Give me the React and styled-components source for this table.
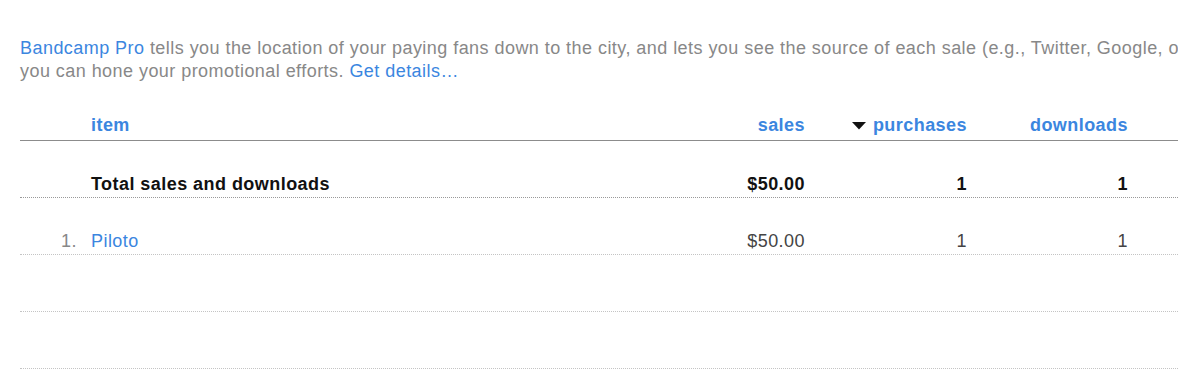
import React from "react";
import styled, { createGlobalStyle } from "styled-components";

const GlobalStyle = createGlobalStyle`
  html, body {
    margin: 0;
    padding: 0;
    background: #fff;
    overflow: hidden;
  }
  body {
    font-family: "Liberation Sans", Arial, Helvetica, sans-serif;
    font-size: 18px;
    line-height: 23px;
    letter-spacing: 0.45px;
  }
`;

const Page = styled.div`
  width: 1300px;
  padding: 37px 0 0 20px;
`;

const Link = styled.a`
  color: #3b86df;
  text-decoration: none;
  font-weight: ${(p) => (p.$bold ? "bold" : "normal")};
  cursor: pointer;
`;

const Intro = styled.p`
  margin: 0 0 31px;
  color: #888;
  white-space: nowrap;
`;

const Table = styled.div`
  width: 1250px;
`;

const Row = styled.div`
  display: grid;
  grid-template-columns: 57px 628px 100px 162px 161px 142px;
  align-items: end;
  padding: ${(p) => (p.$head ? "0 0 3px" : "32px 0 1px")};
  min-height: ${(p) => (p.$head ? "auto" : "23px")};
  border-bottom: 1px ${(p) => (p.$head ? "solid" : "dotted")}
    ${(p) => p.$line};
  font-weight: ${(p) => (p.$bold ? "bold" : "normal")};
  color: ${(p) => (p.$bold ? "#111" : "#444")};
`;

const Num = styled.span`
  text-align: right;
  color: #888;
`;

const Item = styled.span`
  padding-left: 14px;
`;

const Cell = styled.span`
  text-align: right;
  white-space: nowrap;
`;

const SortArrow = styled.svg`
  width: 14px;
  height: 8px;
  margin-right: 7px;
  vertical-align: 1px;
`;

const rows = [
  { num: "1.", name: "Piloto", sales: "$50.00", purchases: "1", downloads: "1" },
  null,
  null,
];

export default function App() {
  return (
    <>
      <GlobalStyle />
      <Page>
        <Intro>
          <Link>Bandcamp Pro</Link> tells you the location of your paying fans
          down to the city, and lets you see the source of each sale (e.g.,
          Twitter, Google, or a particular blog), so
          <br />
          you can hone your promotional efforts. <Link>Get details…</Link>
        </Intro>
        <Table>
          <Row $head $line="#8c8c8c">
            <span />
            <Item>
              <Link $bold>item</Link>
            </Item>
            <Cell>
              <Link $bold>sales</Link>
            </Cell>
            <Cell>
              <SortArrow viewBox="0 0 14 8">
                <polygon points="0,0 14,0 7,7.5" fill="#111" />
              </SortArrow>
              <Link $bold>purchases</Link>
            </Cell>
            <Cell>
              <Link $bold>downloads</Link>
            </Cell>
            <span />
          </Row>
          <Row $bold $line="#999">
            <span />
            <Item>Total sales and downloads</Item>
            <Cell>$50.00</Cell>
            <Cell>1</Cell>
            <Cell>1</Cell>
            <span />
          </Row>
          {rows.map((r, i) =>
            r ? (
              <Row key={i} $line="#c4c4c4">
                <Num>{r.num}</Num>
                <Item>
                  <Link>{r.name}</Link>
                </Item>
                <Cell>{r.sales}</Cell>
                <Cell>{r.purchases}</Cell>
                <Cell>{r.downloads}</Cell>
                <span />
              </Row>
            ) : (
              <Row key={i} $line="#c4c4c4" />
            )
          )}
        </Table>
      </Page>
    </>
  );
}
